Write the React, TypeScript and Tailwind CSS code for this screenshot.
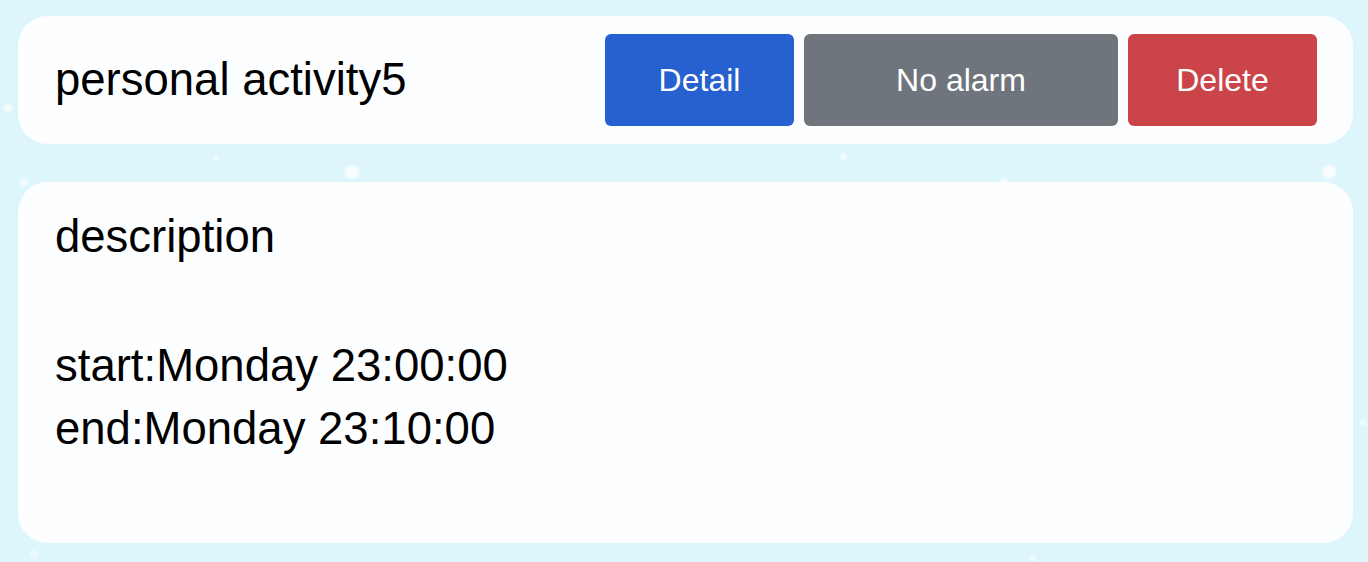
import React from "react";

const dots: { l: number; t: number; s: number; o: number }[] = [
  { l: 4, t: 104, s: 8, o: 0.7 },
  { l: 213, t: 155, s: 6, o: 0.6 },
  { l: 345, t: 165, s: 14, o: 0.8 },
  { l: 20, t: 178, s: 8, o: 0.6 },
  { l: 840, t: 153, s: 7, o: 0.7 },
  { l: 1322, t: 165, s: 14, o: 0.8 },
  { l: 1000, t: 178, s: 8, o: 0.6 },
  { l: 1030, t: 555, s: 6, o: 0.6 },
  { l: 30, t: 550, s: 8, o: 0.5 },
  { l: 1360, t: 420, s: 6, o: 0.6 },
];

export default function App() {
  return (
    <div
      className="relative w-full h-[562px] overflow-hidden bg-[#dcf6fc] pt-[16px] pl-[18px] pr-[15px] flex flex-col gap-[38px]"
      style={{ fontFamily: '"Liberation Sans", Arial, Helvetica, sans-serif' }}
    >
      {dots.map((d, i) => (
        <div
          key={i}
          className="absolute rounded-full bg-white blur-[1px]"
          style={{ left: d.l, top: d.t, width: d.s, height: d.s, opacity: d.o }}
        />
      ))}
      <div className="relative h-[128px] rounded-[30px] bg-[#fdfeff] flex items-center justify-between pl-[37px] pr-[36px]">
        <div className="text-[45.5px] leading-none text-black">personal activity5</div>
        <div className="flex gap-[10px]">
          <button className="w-[189px] h-[92px] rounded-[6px] bg-[#2760cf] text-white text-[32px]">Detail</button>
          <button className="w-[314px] h-[92px] rounded-[6px] bg-[#6e757c] text-white text-[32px]">No alarm</button>
          <button className="w-[189px] h-[92px] rounded-[6px] bg-[#cb444a] text-white text-[32px]">Delete</button>
        </div>
      </div>
      <div className="relative h-[361px] rounded-[30px] bg-[#fdfeff] pl-[37px] pt-[23px] text-[45.5px] leading-[63px] text-black">
        <div>description</div>
        <div className="h-[66px]" />
        <div>start:Monday 23:00:00</div>
        <div>end:Monday 23:10:00</div>
      </div>
    </div>
  );
}
